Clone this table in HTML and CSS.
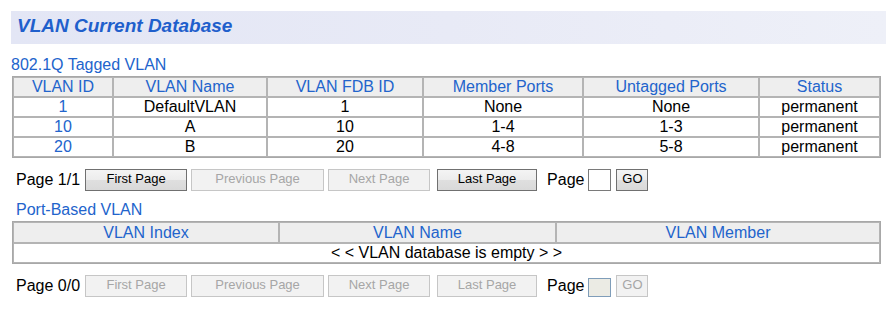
FILE: index.html
```html
<!DOCTYPE html>
<html>
<head>
<meta charset="utf-8">
<title>VLAN Current Database</title>
<link rel="stylesheet" href="styles.css">
</head>
<body>
<div class="page">
  <div class="title-bar">VLAN Current Database</div>

  <div class="section-title">802.1Q Tagged VLAN</div>
  <table class="grid tagged">
    <thead>
      <tr>
        <th class="c-id">VLAN ID</th>
        <th class="c-name">VLAN Name</th>
        <th class="c-fdb">VLAN FDB ID</th>
        <th class="c-member">Member Ports</th>
        <th class="c-untag">Untagged Ports</th>
        <th class="c-status">Status</th>
      </tr>
    </thead>
    <tbody>
      <tr><td class="vid">1</td><td>DefaultVLAN</td><td>1</td><td>None</td><td>None</td><td>permanent</td></tr>
      <tr><td class="vid">10</td><td>A</td><td>10</td><td>1-4</td><td>1-3</td><td>permanent</td></tr>
      <tr><td class="vid">20</td><td>B</td><td>20</td><td>4-8</td><td>5-8</td><td>permanent</td></tr>
    </tbody>
  </table>

  <div class="pager">
    <span class="pager-label">Page 1/1</span>
    <button class="btn w-first">First Page</button>
    <button class="btn w-prev" disabled>Previous Page</button>
    <button class="btn w-next" disabled>Next Page</button>
    <button class="btn w-last">Last Page</button>
    <span class="pager-goto">Page</span>
    <input class="page-input" type="text">
    <button class="btn w-go">GO</button>
  </div>

  <div class="section-title indent">Port-Based VLAN</div>
  <table class="grid port">
    <thead>
      <tr>
        <th class="c-index">VLAN Index</th>
        <th class="c-pname">VLAN Name</th>
        <th>VLAN Member</th>
      </tr>
    </thead>
    <tbody>
      <tr><td colspan="3">&lt; &lt; VLAN database is empty &gt; &gt;</td></tr>
    </tbody>
  </table>

  <div class="pager">
    <span class="pager-label">Page 0/0</span>
    <button class="btn w-first" disabled>First Page</button>
    <button class="btn w-prev" disabled>Previous Page</button>
    <button class="btn w-next" disabled>Next Page</button>
    <button class="btn w-last" disabled>Last Page</button>
    <span class="pager-goto">Page</span>
    <input class="page-input" type="text" disabled>
    <button class="btn w-go" disabled>GO</button>
  </div>
</div>
</body>
</html>
```

FILE: styles.css
```css
* {
  box-sizing: border-box;
}

body {
  margin: 0;
  background: #ffffff;
  font-family: "Liberation Sans", Arial, sans-serif;
  font-size: 16px;
  color: #000000;
}

.page {
  padding: 11px 8px 0 11px;
}

/* Page heading band */
.title-bar {
  height: 33px;
  padding: 0 6px;
  line-height: 29px;
  font-size: 19px;
  font-weight: bold;
  font-style: italic;
  color: #1f5fcc;
  background: linear-gradient(to right, #e3e6f5 0%, #e8eaf6 50%, #eef0f8 100%);
}

.section-title {
  margin-top: 12px;
  height: 18px;
  line-height: 18px;
  color: #2264cc;
}

.section-title.indent {
  margin-top: 10px;
  padding-left: 5px;
}

/* Data grids */
.grid {
  margin: 2px 0 0 1px;
  width: 869px;
  table-layout: fixed;
  border-collapse: separate;
  border-spacing: 0;
  border: 1px solid #a8a8a8;
}

.grid th,
.grid td {
  padding: 0;
  height: 20px;
  line-height: 18px;
  text-align: center;
  font-weight: normal;
  border: 1px solid #b4b4b4;
  white-space: nowrap;
}

.grid th {
  background: #eeeeee;
  color: #2264cc;
}

.grid td.vid {
  color: #2264cc;
}

.c-id { width: 100px; }
.c-name { width: 154px; }
.c-fdb { width: 156px; }
.c-member { width: 160px; }
.c-untag { width: 176px; }

.c-index { width: 266px; }
.c-pname { width: 277px; }

.port th {
  height: 21px;
}

/* Paging controls */
.pager {
  display: flex;
  align-items: center;
  height: 22px;
  margin-top: 11px;
  padding-left: 5px;
}

.pager + .section-title {
  margin-top: 10px;
}

.pager-label {
  line-height: 18px;
  margin-right: 5px;
}

.pager-goto {
  line-height: 18px;
  margin-left: 10px;
  margin-right: 4px;
}

.btn {
  height: 22px;
  padding: 0 0 3px 0;
  margin: 0 4px 0 0;
  font-family: "Liberation Sans", Arial, sans-serif;
  font-size: 13px;
  color: #000000;
  border: 1px solid #707070;
  border-radius: 0;
  background: linear-gradient(#f4f4f4 0%, #ececec 50%, #dfdfdf 52%, #d9d9d9 100%);
}

.btn:disabled {
  color: #a6a6a6;
  border-color: #c6c6c6;
  background: #f2f2f2;
}

.w-first { width: 102px; }
.w-prev { width: 133px; }
.w-next { width: 102px; margin-right: 7px; }
.w-last { width: 100px; margin-right: 0; }
.w-go { width: 32px; margin-left: 5px; }

.page-input {
  width: 23px;
  height: 22px;
  padding: 0;
  border: 1px solid #7a7a7a;
  background: #ffffff;
}

.page-input:disabled {
  height: 19px;
  margin-top: 3px;
  background: #ebebe4;
  border-color: #7f9db9;
}
```
